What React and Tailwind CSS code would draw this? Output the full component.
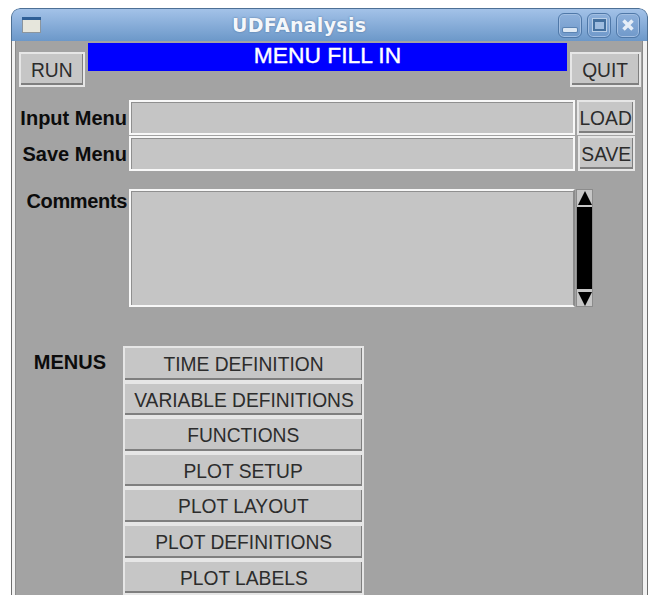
import React from "react";

const font = "font-['Liberation_Sans',Arial,sans-serif]";

function Btn({ label, className = "" }) {
  return (
    <div className={`flex items-center justify-center overflow-hidden border-2 border-[#e6e6e6] bg-[#c6c6c6] text-[21px] font-normal text-[#2c2c2c] shadow-[inset_-1px_-2px_0_#7f7f7f] ${className}`}>
      <span className="inline-block scale-x-[0.915] whitespace-nowrap">{label}</span>
    </div>
  );
}

function Field({ className = "" }) {
  return <div className={`border-2 border-[#f8f8f8] bg-[#c5c5c5] shadow-[inset_1px_1px_0_#8f8f8f] ${className}`} />;
}

function Label({ children, className = "" }) {
  return <div className={`text-right text-[20px] font-bold leading-none text-[#0c0c0c] ${className}`}>{children}</div>;
}

function WinButton({ children }) {
  return (
    <div className="flex h-[25px] w-[24px] items-center justify-center rounded-[6px] border border-[#4f78a8] bg-gradient-to-b from-[#8db0db] to-[#7099ca] shadow-[inset_0_0_0_1px_#a3bfe2]">
      {children}
    </div>
  );
}

const MENUS = [
  "TIME DEFINITION",
  "VARIABLE DEFINITIONS",
  "FUNCTIONS",
  "PLOT SETUP",
  "PLOT LAYOUT",
  "PLOT DEFINITIONS",
  "PLOT LABELS",
];

export default function App() {
  return (
    <div className={`h-[595px] w-[651px] overflow-hidden bg-white pl-[11px] pt-[8px] ${font}`}>
      <div className="flex h-[587px] w-[637px] flex-col overflow-hidden rounded-t-[9px]">
        {/* title bar */}
        <div className="relative flex h-[33px] shrink-0 items-center justify-between rounded-t-[9px] border border-b-0 border-[#4d7095] bg-gradient-to-b from-[#a3c2e8] to-[#6c98c9] pl-[10px] pr-[7px]">
          <svg width="20" height="17" viewBox="0 0 20 17">
            <rect x="0.5" y="0.5" width="18" height="15" fill="#e6e6dc" stroke="#8b959d" />
            <rect x="0" y="0" width="19" height="3" fill="#2f5f96" />
          </svg>
          <div className="absolute left-[220px] top-[6px] font-['DejaVu_Sans',sans-serif] text-[19px] font-bold leading-[20px] tracking-[0.3px] text-[#f4f7fb] [text-shadow:0_0_2px_#4a6d96]">
            UDFAnalysis
          </div>
          <div className="flex gap-[5px]">
            <WinButton>
              <div className="mt-[9px] h-[4px] w-[14px] rounded-[1px] bg-[#dce7f3] shadow-[0_0_0_1px_#5b83b2]" />
            </WinButton>
            <WinButton>
              <div className="h-[12px] w-[13px] border-2 border-t-[3px] border-[#44709f] bg-[#9fbde0] shadow-[0_0_0_1px_#b9cfe8]" />
            </WinButton>
            <WinButton>
              <svg width="16" height="16" viewBox="0 0 16 16">
                <path d="M3.5 3.5 L12.5 12.5 M12.5 3.5 L3.5 12.5" stroke="#e6eef7" strokeWidth="3.5" />
              </svg>
            </WinButton>
          </div>
        </div>

        {/* client area */}
        <div className="flex-1 border-x border-[#6f6f6f] bg-[#f1f1f1] pl-[3px] pr-[4px]">
          <div className="h-full border-x border-[#8a8a8a] bg-[#a3a3a3] pt-[2px]">
            {/* banner row */}
            <div className="flex items-start">
              <Btn label="RUN" className="ml-[3px] mt-[9px] h-[35px] w-[66px] shrink-0" />
              <div className="ml-[3px] h-[28px] w-[479px] shrink-0 bg-[#0000ff] text-center text-[22.8px] leading-[24px] text-white [-webkit-text-stroke:0.4px_white]">
                MENU FILL IN
              </div>
              <Btn label="QUIT" className="ml-[3px] mt-[9px] h-[35px] w-[71px] shrink-0" />
            </div>

            {/* file rows */}
            <div className="mt-[13px] flex flex-col gap-[1px]">
              <div className="flex h-[35px] items-center">
                <Label className="w-[111px] shrink-0">Input Menu</Label>
                <Field className="ml-[2px] h-full w-[446px] shrink-0" />
                <Btn label="LOAD" className="ml-[2px] h-full w-[58px] shrink-0" />
              </div>
              <div className="flex h-[35px] items-center">
                <Label className="w-[111px] shrink-0">Save Menu</Label>
                <Field className="ml-[2px] h-full w-[446px] shrink-0" />
                <Btn label="SAVE" className="ml-[3px] h-full w-[57px] shrink-0" />
              </div>
            </div>

            {/* comments */}
            <div className="mt-[18px] flex items-start">
              <Label className="w-[111px] shrink-0 pt-[2px] tracking-[-0.35px]">Comments</Label>
              <Field className="ml-[2px] h-[118px] w-[446px] shrink-0 border-r-[#8c8c8c]" />
              <div className="ml-[1px] flex h-[118px] w-[17px] shrink-0 flex-col border border-[#8c8c8c] bg-black">
                <div className="flex h-[17px] items-center justify-center border-b-2 border-[#c6c6c6] bg-[#c6c6c6]">
                  <div className="h-0 w-0 border-x-[7px] border-b-[14px] border-x-transparent border-b-black" />
                </div>
                <div className="flex-1 bg-black" />
                <div className="flex h-[17px] items-center justify-center border-t-2 border-[#c6c6c6] bg-[#c6c6c6]">
                  <div className="h-0 w-0 border-x-[7px] border-t-[14px] border-x-transparent border-t-black" />
                </div>
              </div>
            </div>

            {/* menu list */}
            <div className="mt-[39px] flex items-start">
              <Label className="ml-[17px] w-[73px] shrink-0 pt-[6px] text-left">MENUS</Label>
              <div className="ml-[17px] flex w-[241px] flex-col">
                {MENUS.map((m) => (
                  <Btn key={m} label={m} className="h-[35.6px] shrink-0" />
                ))}
                <Btn label="" className="h-[35.6px] shrink-0" />
              </div>
            </div>
          </div>
        </div>
      </div>
    </div>
  );
}
